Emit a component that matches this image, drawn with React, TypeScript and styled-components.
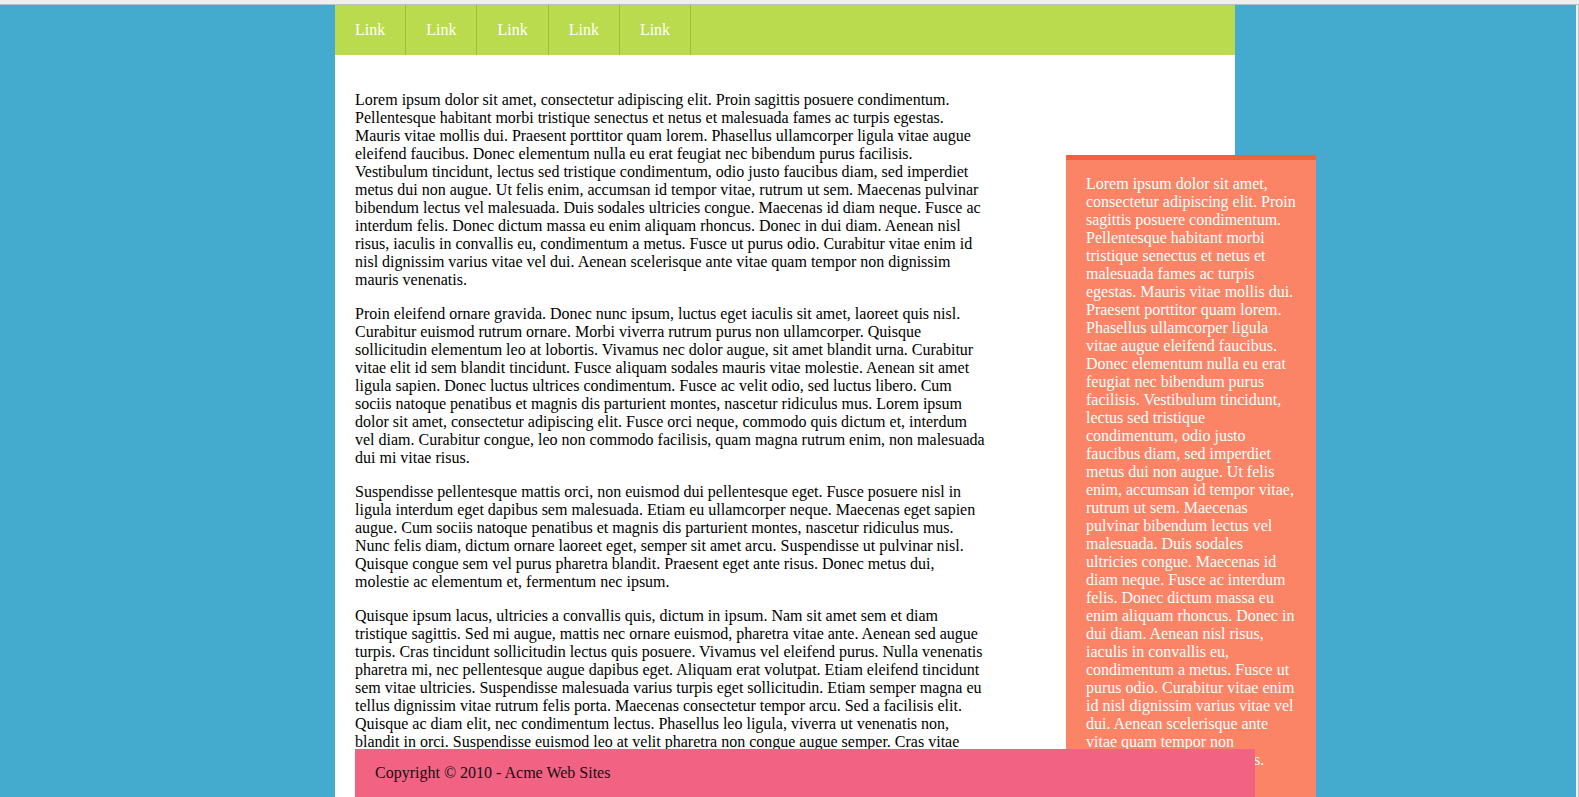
import React from "react";
import styled, { createGlobalStyle } from "styled-components";

const GlobalStyle = createGlobalStyle`
  html, body {
    margin: 0;
    padding: 0;
    height: 100%;
    overflow: hidden;
  }
  body {
    font-family: "Liberation Serif", "Times New Roman", serif;
    font-size: 16px;
    line-height: 18px;
    color: #000;
  }
`;

const Frame = styled.div`
  display: grid;
  grid-template-rows: 5px 1fr;
  grid-template-columns: 1fr 3px;
  height: 100vh;
  background: #efefef;
`;

const TopStrip = styled.div`
  grid-column: 1 / 3;
  background: #efefef;
  border-bottom: 1px solid #b4c3c9;
  box-sizing: border-box;
`;

const ScrollEdge = styled.div`
  background: #efefef;
  border-right: 1px solid #c4c4c4;
  box-sizing: border-box;
`;

const Stage = styled.div`
  background: #44abcf;
  overflow: hidden;
  display: flex;
  justify-content: center;
  padding-right: 6px;
`;

const Container = styled.div`
  position: relative;
  width: 900px;
  flex-shrink: 0;
  height: 100%;
  background: #fff;
`;

const Nav = styled.nav`
  display: flex;
  height: 50px;
  background: #badb4d;
`;

const NavLink = styled.a`
  display: block;
  padding: 0 20px;
  line-height: 50px;
  color: #fff;
  text-decoration: none;
  border-right: 1px solid #9cbf3a;
`;

const Body = styled.div`
  display: flex;
  align-items: flex-start;
  padding: 20px 0 0 20px;
`;

const Main = styled.main`
  width: 634px;
  flex-shrink: 0;
`;

const Para = styled.p`
  margin: 16px 0;
`;

const Sidebar = styled.aside`
  width: 210px;
  flex-shrink: 0;
  margin: 80px 0 0 77px;
  padding: 15px 20px 40px;
  background: #fb8366;
  border-top: 5px solid #f65f3b;
  color: #fff;
`;

const Footer = styled.footer`
  position: absolute;
  left: 20px;
  bottom: 0;
  width: 860px;
  padding: 15px 20px;
  background: #f16283;
  color: #111;
`;

const p1 =
  "Lorem ipsum dolor sit amet, consectetur adipiscing elit. Proin sagittis posuere condimentum. Pellentesque habitant morbi tristique senectus et netus et malesuada fames ac turpis egestas. Mauris vitae mollis dui. Praesent porttitor quam lorem. Phasellus ullamcorper ligula vitae augue eleifend faucibus. Donec elementum nulla eu erat feugiat nec bibendum purus facilisis. Vestibulum tincidunt, lectus sed tristique condimentum, odio justo faucibus diam, sed imperdiet metus dui non augue. Ut felis enim, accumsan id tempor vitae, rutrum ut sem. Maecenas pulvinar bibendum lectus vel malesuada. Duis sodales ultricies congue. Maecenas id diam neque. Fusce ac interdum felis. Donec dictum massa eu enim aliquam rhoncus. Donec in dui diam. Aenean nisl risus, iaculis in convallis eu, condimentum a metus. Fusce ut purus odio. Curabitur vitae enim id nisl dignissim varius vitae vel dui. Aenean scelerisque ante vitae quam tempor non dignissim mauris venenatis.";

const paragraphs = [
  p1,
  "Proin eleifend ornare gravida. Donec nunc ipsum, luctus eget iaculis sit amet, laoreet quis nisl. Curabitur euismod rutrum ornare. Morbi viverra rutrum purus non ullamcorper. Quisque sollicitudin elementum leo at lobortis. Vivamus nec dolor augue, sit amet blandit urna. Curabitur vitae elit id sem blandit tincidunt. Fusce aliquam sodales mauris vitae molestie. Aenean sit amet ligula sapien. Donec luctus ultrices condimentum. Fusce ac velit odio, sed luctus libero. Cum sociis natoque penatibus et magnis dis parturient montes, nascetur ridiculus mus. Lorem ipsum dolor sit amet, consectetur adipiscing elit. Fusce orci neque, commodo quis dictum et, interdum vel diam. Curabitur congue, leo non commodo facilisis, quam magna rutrum enim, non malesuada dui mi vitae risus.",
  "Suspendisse pellentesque mattis orci, non euismod dui pellentesque eget. Fusce posuere nisl in ligula interdum eget dapibus sem malesuada. Etiam eu ullamcorper neque. Maecenas eget sapien augue. Cum sociis natoque penatibus et magnis dis parturient montes, nascetur ridiculus mus. Nunc felis diam, dictum ornare laoreet eget, semper sit amet arcu. Suspendisse ut pulvinar nisl. Quisque congue sem vel purus pharetra blandit. Praesent eget ante risus. Donec metus dui, molestie ac elementum et, fermentum nec ipsum.",
  "Quisque ipsum lacus, ultricies a convallis quis, dictum in ipsum. Nam sit amet sem et diam tristique sagittis. Sed mi augue, mattis nec ornare euismod, pharetra vitae ante. Aenean sed augue turpis. Cras tincidunt sollicitudin lectus quis posuere. Vivamus vel eleifend purus. Nulla venenatis pharetra mi, nec pellentesque augue dapibus eget. Aliquam erat volutpat. Etiam eleifend tincidunt sem vitae ultricies. Suspendisse malesuada varius turpis eget sollicitudin. Etiam semper magna eu tellus dignissim vitae rutrum felis porta. Maecenas consectetur tempor arcu. Sed a facilisis elit. Quisque ac diam elit, nec condimentum lectus. Phasellus leo ligula, viverra ut venenatis non, blandit in orci. Suspendisse euismod leo at velit pharetra non congue augue semper. Cras vitae massa nisi. Nulla facilisi. Vivamus ac lorem sed tellus fermentum volutpat.",
];

const links = ["Link", "Link", "Link", "Link", "Link"];

export default function App() {
  return (
    <>
      <GlobalStyle />
      <Frame>
        <TopStrip />
        <Stage>
          <Container>
            <Nav>
              {links.map((l, i) => (
                <NavLink key={i} href="#">
                  {l}
                </NavLink>
              ))}
            </Nav>
            <Body>
              <Main>
                {paragraphs.map((p, i) => (
                  <Para key={i}>{p}</Para>
                ))}
              </Main>
              <Sidebar>{p1}</Sidebar>
            </Body>
            <Footer>Copyright © 2010 - Acme Web Sites</Footer>
          </Container>
        </Stage>
        <ScrollEdge />
      </Frame>
    </>
  );
}
